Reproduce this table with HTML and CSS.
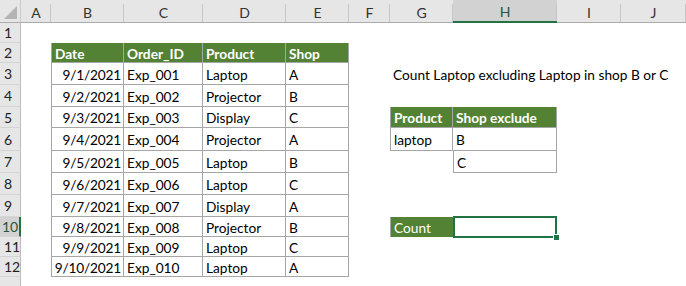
FILE: index.html
```
<!DOCTYPE html>
<html>
<head>
<meta charset="utf-8">
<link rel="stylesheet" href="styles.css">
</head>
<body>
<div class="sheet">
  <div class="corner"></div><div class="ch">A</div><div class="ch">B</div><div class="ch">C</div><div class="ch">D</div><div class="ch">E</div><div class="ch">F</div><div class="ch">G</div><div class="ch sel">H</div><div class="ch">I</div><div class="ch">J</div>

  <div class="rh">1</div><div class="c"></div><div class="c"></div><div class="c"></div><div class="c"></div><div class="c"></div><div class="c"></div><div class="c"></div><div class="c"></div><div class="c"></div><div class="c"></div>

  <div class="rh">2</div><div class="c"></div><div class="c hd bl">Date</div><div class="c hd">Order_ID</div><div class="c hd">Product</div><div class="c hd">Shop</div><div class="c"></div><div class="c"></div><div class="c"></div><div class="c"></div><div class="c"></div>

  <div class="rh">3</div><div class="c"></div><div class="c b bl r">9/1/2021</div><div class="c b">Exp_001</div><div class="c b">Laptop</div><div class="c b">A</div><div class="c"></div><div class="c note">Count Laptop excluding Laptop in shop B or C</div><div class="c"></div><div class="c"></div><div class="c"></div>

  <div class="rh">4</div><div class="c"></div><div class="c b bl r">9/2/2021</div><div class="c b">Exp_002</div><div class="c b">Projector</div><div class="c b">B</div><div class="c"></div><div class="c"></div><div class="c"></div><div class="c"></div><div class="c"></div>

  <div class="rh">5</div><div class="c"></div><div class="c b bl r">9/3/2021</div><div class="c b">Exp_003</div><div class="c b">Display</div><div class="c b">C</div><div class="c"></div><div class="c hd bl">Product</div><div class="c hd">Shop exclude</div><div class="c"></div><div class="c"></div>

  <div class="rh">6</div><div class="c"></div><div class="c b bl r">9/4/2021</div><div class="c b">Exp_004</div><div class="c b">Projector</div><div class="c b">A</div><div class="c"></div><div class="c b bl">laptop</div><div class="c b">B</div><div class="c"></div><div class="c"></div>

  <div class="rh">7</div><div class="c"></div><div class="c b bl r">9/5/2021</div><div class="c b">Exp_005</div><div class="c b">Laptop</div><div class="c b">B</div><div class="c"></div><div class="c"></div><div class="c b bl">C</div><div class="c"></div><div class="c"></div>

  <div class="rh">8</div><div class="c"></div><div class="c b bl r">9/6/2021</div><div class="c b">Exp_006</div><div class="c b">Laptop</div><div class="c b">C</div><div class="c"></div><div class="c"></div><div class="c"></div><div class="c"></div><div class="c"></div>

  <div class="rh">9</div><div class="c"></div><div class="c b bl r">9/7/2021</div><div class="c b">Exp_007</div><div class="c b">Display</div><div class="c b">A</div><div class="c"></div><div class="c"></div><div class="c"></div><div class="c"></div><div class="c"></div>

  <div class="rh rsel">10</div><div class="c"></div><div class="c b bl r">9/8/2021</div><div class="c b">Exp_008</div><div class="c b">Projector</div><div class="c b">B</div><div class="c"></div><div class="c lbl">Count</div><div class="c active"></div><div class="c"></div><div class="c"></div>

  <div class="rh">11</div><div class="c"></div><div class="c b bl r">9/9/2021</div><div class="c b">Exp_009</div><div class="c b">Laptop</div><div class="c b">C</div><div class="c"></div><div class="c"></div><div class="c"></div><div class="c"></div><div class="c"></div>

  <div class="rh">12</div><div class="c"></div><div class="c b bl r">9/10/2021</div><div class="c b">Exp_010</div><div class="c b">Laptop</div><div class="c b">A</div><div class="c"></div><div class="c"></div><div class="c"></div><div class="c"></div><div class="c"></div>

  <div class="rh last">13</div><div class="c"></div><div class="c"></div><div class="c"></div><div class="c"></div><div class="c"></div><div class="c"></div><div class="c"></div><div class="c"></div><div class="c"></div><div class="c"></div>
</div>
</body>
</html>
```

FILE: styles.css
```
html, body {
  margin: 0;
  padding: 0;
  background: #ffffff;
  overflow: hidden;
}

.sheet {
  display: grid;
  grid-template-columns: 21px 30px 73px 79px 83px 63px 41px 63px 104px 64px 65px;
  grid-template-rows: 23px 20px 20px 22px 22px 21px 23px 22px 22px 22px 20px 20px 20px 20px;
  font-family: Lato, "Liberation Sans", sans-serif;
  font-size: 13.7px;
  color: #000;
  width: 686px;
}

.corner {
  background: #e6e6e6;
  border-right: 1px solid #c8c8c8;
  border-bottom: 1px solid #ababab;
  box-sizing: border-box;
  position: relative;
}
.corner::after {
  content: "";
  position: absolute;
  right: 3px;
  bottom: 3px;
  width: 0;
  height: 0;
  border-left: 13px solid transparent;
  border-bottom: 13px solid #b4b4b4;
}

.ch {
  background: #e6e6e6;
  border-bottom: 1px solid #ababab;
  box-sizing: border-box;
  display: flex;
  align-items: center;
  justify-content: center;
  font-size: 14px;
  color: #333;
  padding-top: 2px;
  position: relative;
}
.ch::after {
  content: "";
  position: absolute;
  right: 0;
  top: 4px;
  bottom: 0;
  width: 1px;
  background: #c6c6c6;
}
.ch.sel {
  background: #d2d2d2;
  border-bottom: 2px solid #217346;
  color: #26553b;
}

.rh {
  background: #e6e6e6;
  border-right: 1px solid #bdbdbd;
  border-bottom: 1px solid #d4d4d4;
  box-sizing: border-box;
  display: flex;
  align-items: center;
  padding-left: 4px;
  font-size: 14px;
  color: #222;
}
.rh.rsel {
  background: #d2d2d2;
  border-right: 2px solid #217346;
  color: #26553b;
  padding-left: 2px;
}
.rh.last {
  align-items: flex-start;
  padding-top: 6px;
}

.c {
  box-sizing: border-box;
  display: flex;
  align-items: center;
  padding: 1px 3px 0 3px;
  white-space: nowrap;
  min-width: 0;
}

.b {
  border-right: 1px solid #a6a6a6;
  border-bottom: 1px solid #a6a6a6;
}
.bl {
  border-left: 1px solid #a6a6a6;
}
.r {
  justify-content: flex-end;
  padding-right: 2px;
  padding-left: 0;
  letter-spacing: -0.2px;
}

.hd {
  background: #548235;
  color: #ffffff;
  font-weight: bold;
  border-right: 1px solid #a6a6a6;
  border-bottom: 1px solid #a6a6a6;
}

.note {
  overflow: visible;
  padding-left: 3px;
}

.lbl {
  background: #548235;
  color: #ffffff;
  border-left: 1px solid #a6a6a6;
}

.active {
  border: 2px solid #217346;
  position: relative;
  margin: -1px 0 0 0;
  height: 22px;
}
.active::after {
  content: "";
  position: absolute;
  right: -5px;
  bottom: -5px;
  width: 5px;
  height: 5px;
  background: #217346;
  border: 1px solid #ffffff;
}
```
